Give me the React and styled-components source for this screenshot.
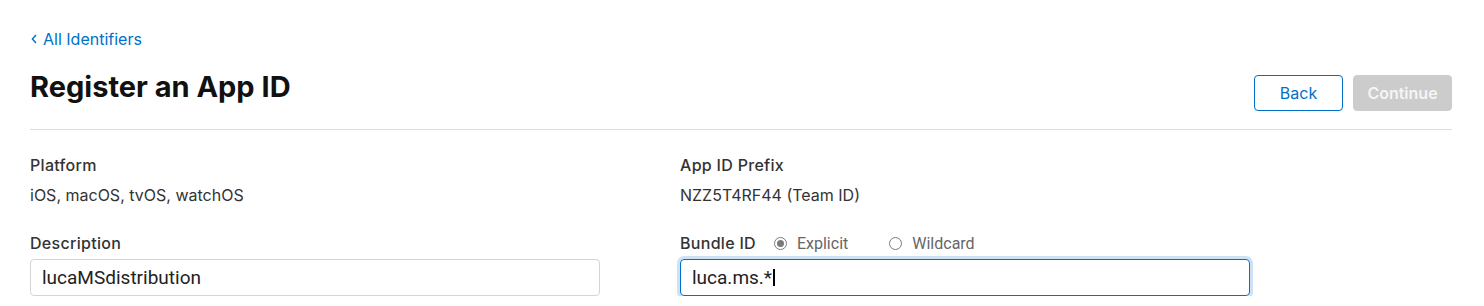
import styled, { createGlobalStyle } from "styled-components";

const GlobalStyle = createGlobalStyle`
  body {
    margin: 0;
    background: #fff;
    font-family: Inter, "Noto Sans", sans-serif;
    color: #111;
  }
`;

const Page = styled.main`
  padding: 29px 32px 0 30px;
`;

const BackLink = styled.a`
  display: flex;
  width: fit-content;
  align-items: center;
  gap: 6px;
  height: 20px;
  font-size: 16px;
  color: #0070c9;
  text-decoration: none;
  line-height: 20px;
  cursor: pointer;

  svg {
    width: 6px;
    height: 10px;
    margin-left: 1px;
  }
`;

const Header = styled.header`
  display: flex;
  align-items: flex-start;
  justify-content: space-between;
  padding: 20px 0 18px;
  border-bottom: 1px solid #dcdcdc;
`;

const Title = styled.h1`
  margin: 0;
  font-size: 29px;
  line-height: 35px;
  font-weight: 700;
  color: #111;
`;

const Actions = styled.div`
  display: flex;
  gap: 10px;
  margin-top: 6px;
`;

const Button = styled.button`
  height: 36px;
  width: ${p => (p.$primary ? "99px" : "89px")};
  padding: 0;
  font-family: Inter, sans-serif;
  font-size: 16px;
  font-weight: ${p => (p.$primary ? 600 : 400)};
  border-radius: 4px;
  border: 1px solid ${p => (p.$primary ? "#cccccc" : "#0070c9")};
  background: ${p => (p.$primary ? "#cccccc" : "#fff")};
  color: ${p => (p.$primary ? "#f5f5f5" : "#0070c9")};
`;

const Form = styled.section`
  display: grid;
  grid-template-columns: 650px 650px;
  row-gap: 25px;
  padding-top: 23px;
`;

const Field = styled.div`
  display: flex;
  flex-direction: column;
`;

const LabelRow = styled.div`
  display: flex;
  align-items: center;
  height: 24px;
  margin-bottom: 4px;
`;

const Label = styled.span`
  font-size: 16px;
  font-weight: 500;
  letter-spacing: 0.3px;
  color: #333;
`;

const Value = styled.span`
  font-size: 16px;
  color: #333;
  line-height: 22px;
  padding-top: 3px;
`;

const RadioOption = styled.label`
  display: inline-flex;
  align-items: center;
  gap: 10px;
  margin-left: ${p => (p.$first ? "18px" : "41px")};
  font-family: Roboto, sans-serif;
  font-size: 16px;
  color: #666;
`;

const RadioDot = styled.span`
  width: 13px;
  height: 13px;
  border-radius: 50%;
  border: 1px solid #7a7a7a;
  box-sizing: border-box;
  display: inline-flex;
  align-items: center;
  justify-content: center;
  background: #fff;

  &::after {
    content: "";
    width: 7px;
    height: 7px;
    border-radius: 50%;
    background: ${p => (p.$checked ? "#7a7a7a" : "transparent")};
  }
`;

const Input = styled.div`
  width: 570px;
  height: 37px;
  box-sizing: border-box;
  display: flex;
  align-items: center;
  padding: 0 11px;
  font-family: Roboto, sans-serif;
  font-size: 19px;
  color: #222;
  border-radius: 4px;
  border: 1px solid ${p => (p.$focused ? "#0070c9" : "#d4d4d4")};
  box-shadow: ${p => (p.$focused ? "0 0 0 3px #cfe2f5" : "none")};
`;

const Caret = styled.span`
  display: inline-block;
  width: 2px;
  height: 17px;
  background: #000;
  margin-left: 1px;
`;

export default function App() {
  return (
    <>
      <GlobalStyle />
      <Page>
        <BackLink>
          <svg viewBox="0 0 6 10" fill="none" stroke="#0070c9" strokeWidth="1.4">
            <path d="M5 1 L1.4 5 L5 9" />
          </svg>
          All Identifiers
        </BackLink>
        <Header>
          <Title>Register an App ID</Title>
          <Actions>
            <Button>Back</Button>
            <Button $primary>Continue</Button>
          </Actions>
        </Header>
        <Form>
          <Field>
            <LabelRow>
              <Label>Platform</Label>
            </LabelRow>
            <Value>iOS, macOS, tvOS, watchOS</Value>
          </Field>
          <Field>
            <LabelRow>
              <Label>App ID Prefix</Label>
            </LabelRow>
            <Value>NZZ5T4RF44 (Team ID)</Value>
          </Field>
          <Field>
            <LabelRow>
              <Label>Description</Label>
            </LabelRow>
            <Input>lucaMSdistribution</Input>
          </Field>
          <Field>
            <LabelRow>
              <Label>Bundle ID</Label>
              <RadioOption $first>
                <RadioDot $checked />
                Explicit
              </RadioOption>
              <RadioOption>
                <RadioDot />
                Wildcard
              </RadioOption>
            </LabelRow>
            <Input $focused>
              luca.ms.*
              <Caret />
            </Input>
          </Field>
        </Form>
      </Page>
    </>
  );
}
